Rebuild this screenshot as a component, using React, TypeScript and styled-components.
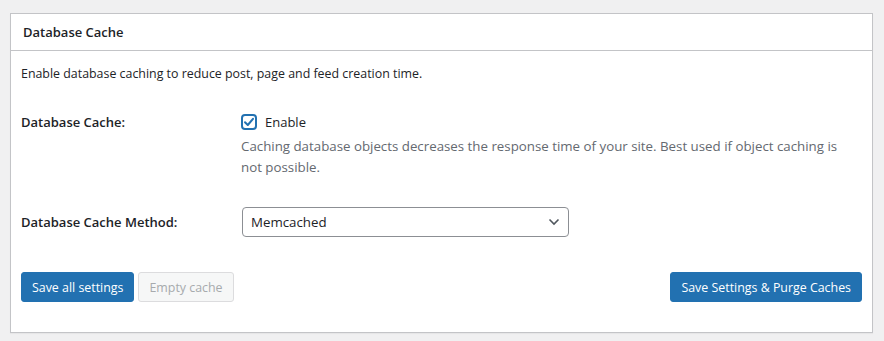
import React from 'react';
import styled, { createGlobalStyle } from 'styled-components';

const GlobalStyle = createGlobalStyle`
  html, body {
    margin: 0;
    padding: 0;
    background: #f0f0f1;
  }
  body {
    font-family: "Open Sans", "Noto Sans", sans-serif;
    font-size: 13px;
    color: #1d2327;
  }
`;

const Page = styled.div`
  padding: 13px 11px 8px 10px;
`;

const Panel = styled.section`
  background: #fff;
  border: 1px solid #c3c4c7;
  box-shadow: 0 1px 1px rgba(0, 0, 0, 0.04);
`;

const PanelHeader = styled.h3`
  margin: 0;
  padding: 0 12px;
  height: 36px;
  display: flex;
  align-items: center;
  font-size: 13px;
  font-weight: 600;
  border-bottom: 1px solid #c3c4c7;
`;

const PanelBody = styled.div`
  padding: 13px 10px 30px 10px;
`;

const Intro = styled.p`
  margin: 0 0 28px;
  font-size: 12.4px;
  line-height: 20px;
`;

const FieldRow = styled.div<{ $gap?: number; $top?: number }>`
  display: grid;
  grid-template-columns: 220px 1fr;
  align-items: ${({ $gap }) => ($gap ? 'center' : 'start')};
  margin-top: ${({ $top }) => $top ?? 0}px;
  margin-bottom: ${({ $gap }) => $gap ?? 0}px;
`;

const Label = styled.div`
  font-weight: 600;
  font-size: 13px;
  line-height: 20px;
`;

const CheckLine = styled.label`
  display: flex;
  align-items: center;
  gap: 8px;
  font-size: 13px;
  line-height: 20px;
`;

const Box = styled.span`
  width: 16px;
  height: 16px;
  box-sizing: border-box;
  border: 2px solid #2271b1;
  border-radius: 4px;
  display: flex;
  align-items: center;
  justify-content: center;
  color: #2271b1;
`;

const Help = styled.p`
  margin: 4px 0 0;
  max-width: 605px;
  color: #646970;
  font-size: 13.3px;
  line-height: 21px;
`;

const Select = styled.div`
  width: 327px;
  height: 30px;
  box-sizing: border-box;
  margin-left: 1px;
  border: 1px solid #8c8f94;
  border-radius: 4px;
  display: flex;
  align-items: center;
  justify-content: space-between;
  padding: 0 8px;
  font-size: 13.3px;
`;

const Actions = styled.div`
  display: flex;
  align-items: center;
  gap: 4px;
`;

const Spacer = styled.div`
  flex: 1;
`;

const Button = styled.button<{ $primary?: boolean }>`
  height: 30px;
  padding: 0 10px;
  border-radius: 3px;
  font-family: inherit;
  font-size: 12.4px;
  border: 1px solid ${({ $primary }) => ($primary ? '#2271b1' : '#dcdcde')};
  background: ${({ $primary }) => ($primary ? '#2271b1' : '#f6f7f7')};
  color: ${({ $primary }) => ($primary ? '#fff' : '#a7aaad')};
`;

export default function App() {
  return (
    <>
      <GlobalStyle />
      <Page>
        <Panel>
          <PanelHeader>Database Cache</PanelHeader>
          <PanelBody>
            <Intro>Enable database caching to reduce post, page and feed creation time.</Intro>
            <FieldRow>
              <Label>Database Cache:</Label>
              <div>
                <CheckLine>
                  <Box>
                    <svg width="12" height="12" viewBox="0 0 12 12" fill="none">
                      <path d="M2 6.2 L4.8 9 L10 2.8" stroke="currentColor" strokeWidth="2" strokeLinecap="round" strokeLinejoin="round" />
                    </svg>
                  </Box>
                  Enable
                </CheckLine>
                <Help>
                  Caching database objects decreases the response time of your site. Best used if object caching is not possible.
                </Help>
              </div>
            </FieldRow>
            <FieldRow $gap={35} $top={29}>
              <Label>Database Cache Method:</Label>
              <Select>
                Memcached
                <svg width="12" height="8" viewBox="0 0 12 8" fill="none">
                  <path d="M1.5 1.5 L6 6 L10.5 1.5" stroke="#50575e" strokeWidth="1.6" />
                </svg>
              </Select>
            </FieldRow>
            <Actions>
              <Button $primary>Save all settings</Button>
              <Button disabled>Empty cache</Button>
              <Spacer />
              <Button $primary>Save Settings &amp; Purge Caches</Button>
            </Actions>
          </PanelBody>
        </Panel>
      </Page>
    </>
  );
}
